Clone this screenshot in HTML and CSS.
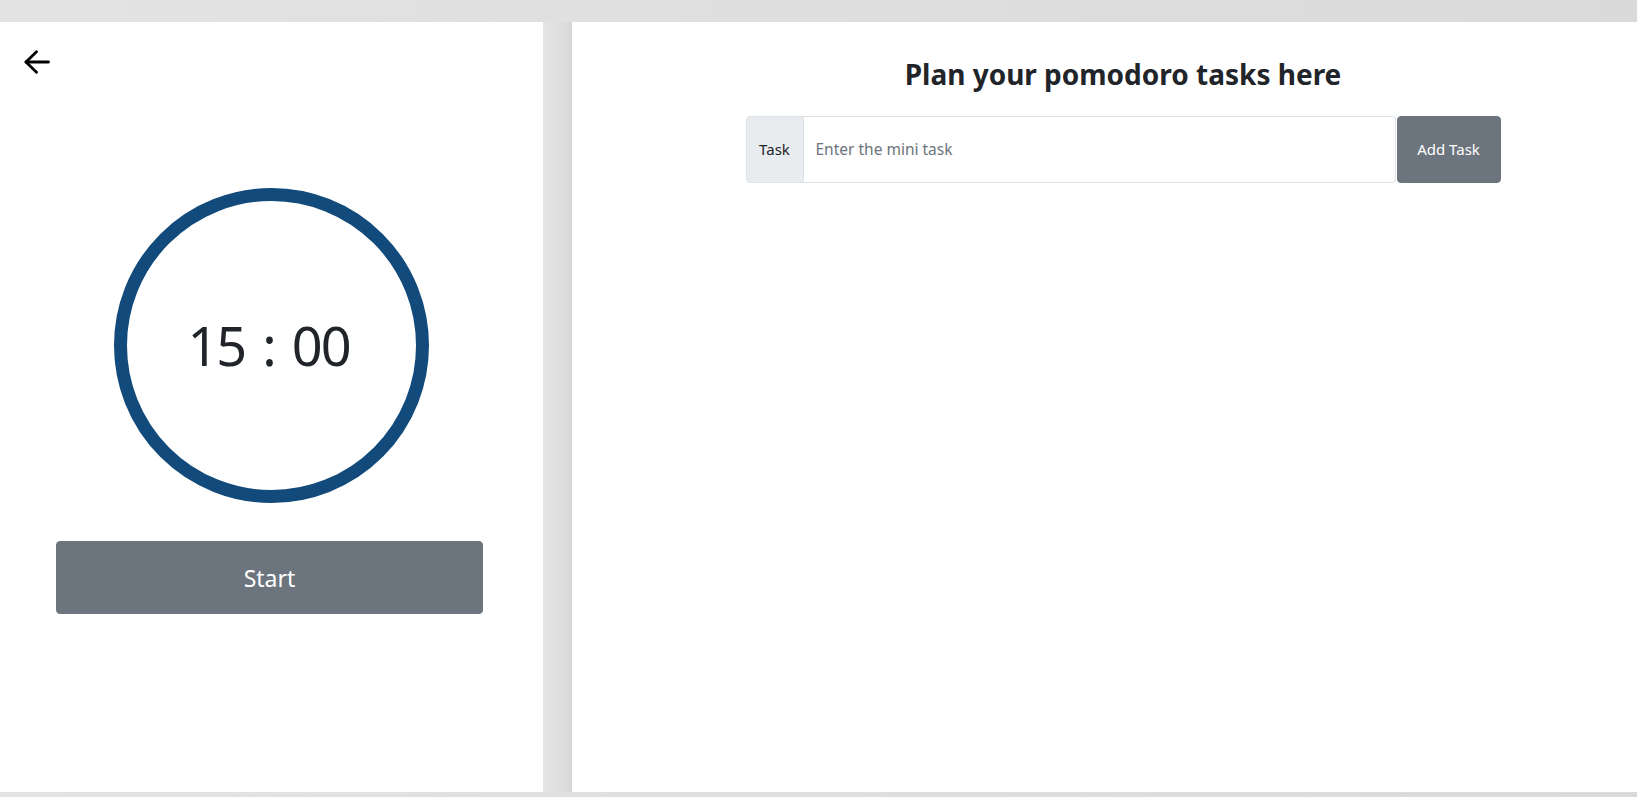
FILE: index.html
```html
<!DOCTYPE html>
<html lang="en">
<head>
<meta charset="utf-8">
<title>Pomodoro</title>
<link rel="stylesheet" href="styles.css">
</head>
<body>
<div class="app">
  <section class="timer-panel">
    <button class="back" aria-label="Back">
      <svg width="26" height="24" viewBox="0 0 26 24" fill="none" stroke="#000" stroke-width="2.8" stroke-linecap="round" stroke-linejoin="round">
        <line x1="2" y1="12" x2="24.5" y2="12"/>
        <polyline points="12.5,1.8 2,12 12.5,22.2"/>
      </svg>
    </button>
    <div class="clock"><span class="time">15 : 00</span></div>
    <button class="start">Start</button>
  </section>
  <div class="divider"></div>
  <section class="task-panel">
    <h3 class="title">Plan your pomodoro tasks here</h3>
    <div class="input-group">
      <span class="addon">Task</span>
      <input class="task-input" type="text" placeholder="Enter the mini task">
      <button class="add">Add Task</button>
    </div>
  </section>
</div>
</body>
</html>
```
FILE: styles.css
```css
* { box-sizing: border-box; }
html, body { margin: 0; padding: 0; }
body {
  background: #dcdcdc;
  font-family: "Noto Sans", "Open Sans", sans-serif;
  color: #212529;
  width: 1637px;
  height: 797px;
  overflow: hidden;
}
.app {
  display: flex;
  height: 797px;
  padding-top: 22px;
  padding-bottom: 5px;
  background: linear-gradient(to right, #e3e3e3, #dadada);
}
.timer-panel {
  width: 543px;
  background: #fff;
  display: flex;
  flex-direction: column;
}
.divider {
  width: 29px;
  background: linear-gradient(to right, #e4e4e4, #dedede 70%, #d6d6d6);
}
.task-panel {
  flex: 1;
  background: #fff;
  display: flex;
  flex-direction: column;
  align-items: center;
  padding-left: 37px;
}
.back {
  margin: 28px 0 0 24px;
  padding: 0;
  border: 0;
  background: none;
  width: 26px;
  height: 24px;
  display: block;
  cursor: pointer;
}
.back svg { display: block; }
.clock {
  width: 315px;
  height: 315px;
  margin: 114px auto 0;
  border: 13px solid #114a7b;
  border-radius: 50%;
  display: flex;
  align-items: center;
  justify-content: center;
}
.time {
  font-size: 54px;
  letter-spacing: -2px;
  word-spacing: 5px;
  line-height: 1;
  color: #212529;
  margin-top: -2px;
  margin-left: -6px;
}
.start {
  margin: 38px 0 0 56px;
  width: 427px;
  height: 73px;
  border: 1px solid #6c757d;
  border-radius: 4px;
  background: #6c757d;
  color: #fff;
  font-family: inherit;
  font-size: 23px;
  cursor: pointer;
}
.title {
  margin: 36px 0 0;
  font-size: 28px;
  font-weight: 700;
  line-height: 1.2;
  color: #212529;
}
.input-group {
  margin-top: 24px;
  width: 755px;
  height: 67px;
  display: flex;
}
.addon {
  width: 58px;
  display: flex;
  align-items: center;
  justify-content: center;
  background: #e9ecef;
  border: 1px solid #dee2e6;
  border-radius: 4px 0 0 4px;
  font-size: 15px;
  color: #212529;
}
.task-input {
  flex: 1;
  border: 1px solid #dee2e6;
  border-left: 0;
  border-radius: 0 4px 4px 0;
  padding: 0 12px;
  font-family: inherit;
  font-size: 15.5px;
  color: #212529;
  outline: none;
}
.task-input::placeholder { color: #6c757d; }
.add {
  width: 104px;
  margin-left: 1px;
  border: 1px solid #6c757d;
  border-radius: 4px;
  background: #6c757d;
  color: #fff;
  font-family: inherit;
  font-size: 15px;
  cursor: pointer;
}
```
